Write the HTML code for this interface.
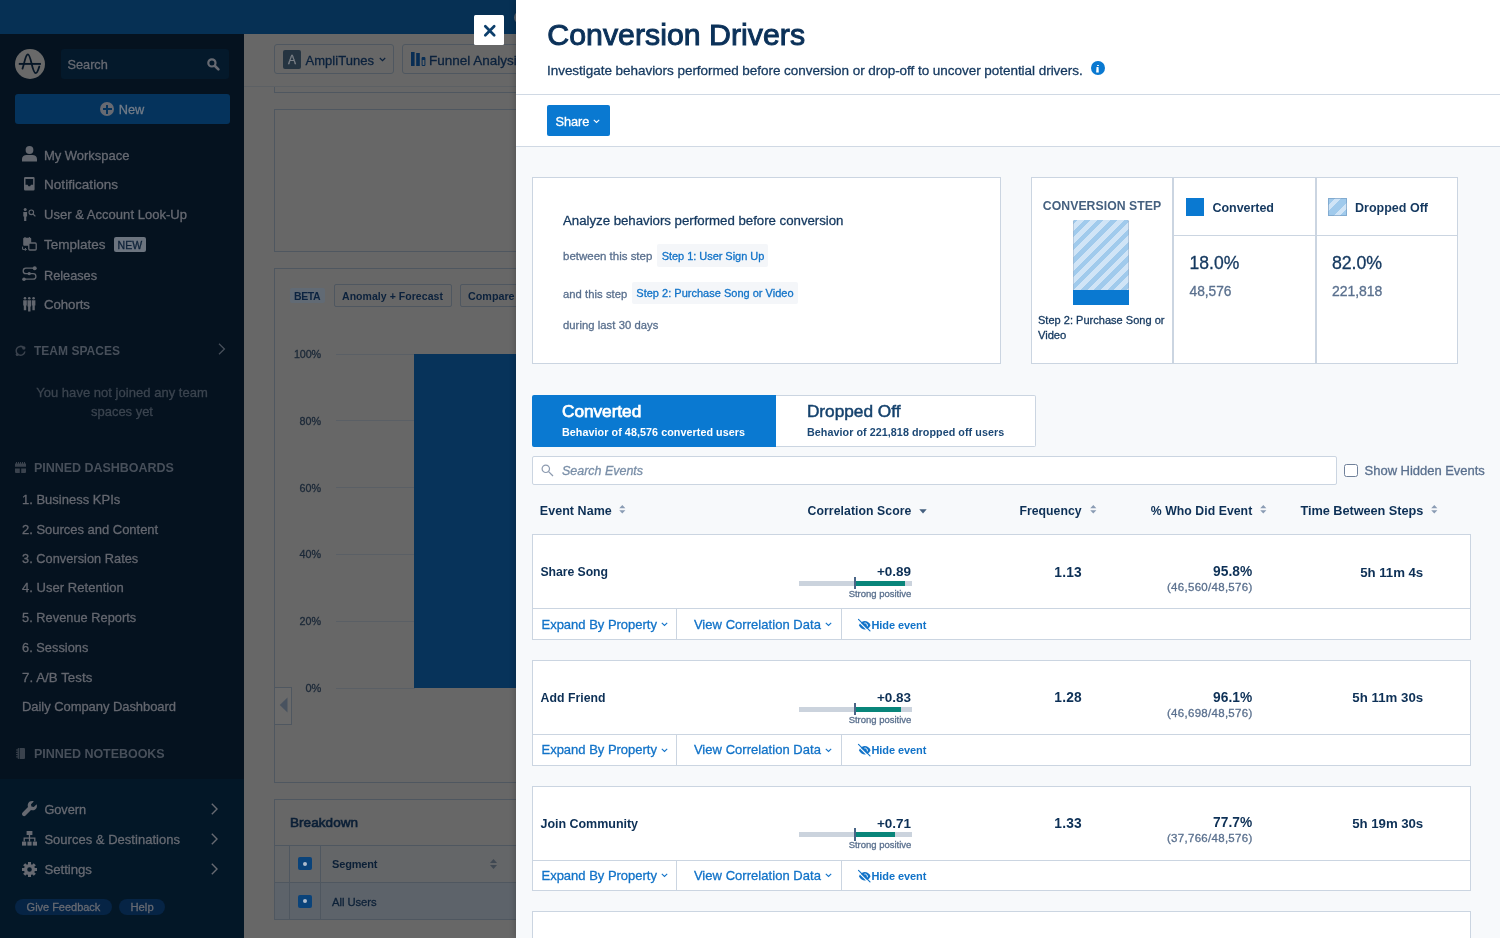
<!DOCTYPE html>
<html><head><meta charset="utf-8"><title>Conversion Drivers</title>
<style>
html,body{margin:0;padding:0}
body{width:1500px;height:938px;overflow:hidden;position:relative;background:#676767;font-family:"Liberation Sans",sans-serif}
.a{position:absolute;box-sizing:border-box}
.t{position:absolute;white-space:nowrap;display:block}
svg{position:absolute;overflow:visible}
</style></head><body><div id="w" style="position:absolute;left:0;top:0;width:1500px;height:938px;will-change:transform">
<div class="a" style="left:0;top:0;width:1500px;height:34px;background:#063054"></div>
<div class="a" style="left:514.4px;top:10.6px;width:13px;height:13px;border-radius:50%;background:#5b626b"></div>
<div class="a" style="left:244px;top:34px;width:272px;height:904px;background:#676767"></div>
<div class="a" style="left:244px;top:86px;width:272px;height:1px;background:#5c6064"></div>
<div class="a" style="left:274px;top:44px;width:120px;height:30px;border:1px solid #4f5760;border-radius:3px"></div>
<div class="a" style="left:283px;top:50.4px;width:18px;height:18.3px;background:#253441;border-radius:2px"></div>
<span class="t" style="left:288.0px;top:52.1px;font-size:12.0px;line-height:16px;color:#7b8087;letter-spacing:-0.02px;-webkit-text-stroke:0.3px;">A</span>
<span class="t" style="left:305.5px;top:50.6px;font-size:13.0px;line-height:19px;color:#0b213c;letter-spacing:0.04px;-webkit-text-stroke:0.3px;">AmpliTunes</span>
<svg style="left:379px;top:57px" width="7" height="5" viewBox="0 0 7 5"><path d="M0.8 1 L3.5 3.6 L6.2 1" fill="none" stroke="#0b213c" stroke-width="1.2"/></svg>
<div class="a" style="left:402px;top:44px;width:150px;height:30px;border:1px solid #4f5760;border-radius:3px"></div>
<svg style="left:410.5px;top:52px" width="15" height="15" viewBox="0 0 15 15"><rect x="0" y="0" width="3.6" height="14" fill="#082d54"/><rect x="5.2" y="1" width="3.6" height="13" fill="#082d54"/><rect x="10.6" y="5" width="3.8" height="9" rx="1" fill="#082d54"/><rect x="11.6" y="8" width="1.8" height="5" fill="#686868"/></svg>
<span class="t" style="left:429.0px;top:50.6px;font-size:13.5px;line-height:19px;color:#0b213c;-webkit-text-stroke:0.3px;">Funnel Analysis</span>
<div class="a" style="left:274px;top:80px;width:260px;height:13px;border:1px solid #4f5760;border-top:none;clip-path:inset(7px 0 0 0)"></div>
<div class="a" style="left:274px;top:109px;width:260px;height:143px;border:1px solid #4f5760"></div>
<div class="a" style="left:274px;top:268px;width:260px;height:515px;border:1px solid #4f5760"></div>
<div class="a" style="left:290px;top:288px;width:35px;height:14.5px;background:#616a74;border-radius:2px"></div>
<span class="t" style="left:294.0px;top:288.9px;font-size:10.5px;line-height:15px;color:#0b2340;font-weight:700;letter-spacing:-0.4px;">BETA</span>
<div class="a" style="left:334px;top:284px;width:118px;height:22.8px;border:1px solid #4f5760;border-radius:2px"></div>
<span class="t" style="left:342.0px;top:288.9px;font-size:10.5px;line-height:15px;color:#0b213c;font-weight:700;letter-spacing:0.05px;">Anomaly + Forecast</span>
<div class="a" style="left:460px;top:284px;width:80px;height:22.8px;border:1px solid #4f5760;border-radius:2px"></div>
<span class="t" style="left:468.0px;top:288.9px;font-size:10.75px;line-height:15px;color:#0b213c;font-weight:700;">Compare</span>
<span class="t" style="left:293.9px;top:347.0px;font-size:10.75px;line-height:15px;color:#1c2938;letter-spacing:-0.07px;-webkit-text-stroke:0.3px;">100%</span>
<div class="a" style="left:335.5px;top:353.5px;width:79px;height:1px;background:#5a5f65"></div>
<span class="t" style="left:299.6px;top:413.8px;font-size:10.75px;line-height:15px;color:#1c2938;letter-spacing:0.03px;-webkit-text-stroke:0.3px;">80%</span>
<div class="a" style="left:335.5px;top:420.3px;width:79px;height:1px;background:#5a5f65"></div>
<span class="t" style="left:299.6px;top:480.6px;font-size:10.75px;line-height:15px;color:#1c2938;letter-spacing:0.03px;-webkit-text-stroke:0.3px;">60%</span>
<div class="a" style="left:335.5px;top:487.1px;width:79px;height:1px;background:#5a5f65"></div>
<span class="t" style="left:299.6px;top:547.4px;font-size:10.75px;line-height:15px;color:#1c2938;letter-spacing:0.03px;-webkit-text-stroke:0.3px;">40%</span>
<div class="a" style="left:335.5px;top:553.9px;width:79px;height:1px;background:#5a5f65"></div>
<span class="t" style="left:299.6px;top:614.2px;font-size:10.75px;line-height:15px;color:#1c2938;letter-spacing:0.03px;-webkit-text-stroke:0.3px;">20%</span>
<div class="a" style="left:335.5px;top:620.7px;width:79px;height:1px;background:#5a5f65"></div>
<span class="t" style="left:305.4px;top:681.0px;font-size:11.0px;line-height:15px;color:#1c2938;letter-spacing:-0.11px;-webkit-text-stroke:0.3px;">0%</span>
<div class="a" style="left:335.5px;top:687.5px;width:79px;height:1px;background:#5a5f65"></div>
<div class="a" style="left:414px;top:354px;width:110px;height:334px;background:#07335a"></div>
<div class="a" style="left:274px;top:687px;width:18px;height:38px;border:1px solid #4f5760;background:#6a6a6a"></div>
<svg style="left:279px;top:697px" width="9" height="16" viewBox="0 0 9 16"><path d="M8.5 0.5 L8.5 15.5 L0.8 8 Z" fill="#48525f"/></svg>
<div class="a" style="left:274px;top:799px;width:260px;height:121px;border:1px solid #4f5760"></div>
<span class="t" style="left:290.0px;top:812.6px;font-size:13.5px;line-height:19px;color:#0b1f36;letter-spacing:0.06px;-webkit-text-stroke:0.65px #0b1f36;">Breakdown</span>
<div class="a" style="left:275px;top:845px;width:260px;height:37px;background:#646668;border-top:1px solid #4f5760"></div>
<div class="a" style="left:275px;top:882px;width:260px;height:37px;background:#5d636a;border-top:1px solid #4f5760"></div>
<div class="a" style="left:289px;top:845px;width:1px;height:74px;background:#4f5760"></div>
<div class="a" style="left:320px;top:845px;width:1px;height:74px;background:#4f5760"></div>
<div class="a" style="left:298px;top:857.0px;width:13.7px;height:13.3px;background:#0a437a;border-radius:2px"></div>
<div class="a" style="left:303px;top:861.6px;width:3.8px;height:4.2px;background:#aebccd;border-radius:2px"></div>
<div class="a" style="left:298px;top:894.6px;width:13.7px;height:13.3px;background:#0a437a;border-radius:2px"></div>
<div class="a" style="left:303px;top:899.2px;width:3.8px;height:4.2px;background:#aebccd;border-radius:2px"></div>
<span class="t" style="left:332.0px;top:856.2px;font-size:11.0px;line-height:16px;color:#0b1f36;font-weight:700;letter-spacing:-0.16px;">Segment</span>
<svg style="left:490px;top:859px" width="7" height="10" viewBox="0 0 7 10"><path d="M3.5 0 L7 4 L0 4 Z M0 6 L7 6 L3.5 10 Z" fill="#3f4852"/></svg>
<span class="t" style="left:332.0px;top:893.6px;font-size:11.25px;line-height:16px;color:#0d2138;letter-spacing:-0.05px;-webkit-text-stroke:0.3px;">All Users</span>
<div class="a" style="left:0;top:34px;width:244px;height:904px;background:#05121f"></div>
<div class="a" style="left:0;top:779px;width:244px;height:159px;background:#031727"></div>
<div class="a" style="left:14.8px;top:48.6px;width:30.6px;height:30.6px;border-radius:50%;background:#696969"></div>
<svg style="left:15px;top:49px" width="30" height="30" viewBox="0 0 30 30"><path d="M3.8 14.9 H25.9" stroke="#061626" stroke-width="1.9" fill="none"/><path d="M7.5 19.6 C9.6 14 10.4 5.3 12.9 5.3 C16 5.3 17.1 24.1 20.7 24.1 C22.5 24.1 23.5 20 24.3 17.5" stroke="#061626" stroke-width="1.8" fill="none" stroke-linecap="round"/></svg>
<div class="a" style="left:61px;top:49px;width:168px;height:30px;background:#04192b;border-radius:3px"></div>
<span class="t" style="left:67.6px;top:55.8px;font-size:12.75px;line-height:18px;color:#676a72;letter-spacing:-0.04px;-webkit-text-stroke:0.3px;">Search</span>
<svg style="left:207px;top:58px" width="13" height="13" viewBox="0 0 13 13"><circle cx="4.9" cy="4.9" r="3.6" fill="none" stroke="#676a72" stroke-width="2.2"/><path d="M8 8 L11.4 11.4" stroke="#676a72" stroke-width="2.6" stroke-linecap="round"/></svg>
<div class="a" style="left:15px;top:94px;width:215px;height:30px;background:#05335c;border-radius:3px"></div>
<div class="a" style="left:100px;top:102px;width:14px;height:14px;border-radius:50%;background:#676a72"></div>
<div class="a" style="left:102.5px;top:107.8px;width:9px;height:2.4px;background:#05335c"></div><div class="a" style="left:105.8px;top:104.5px;width:2.4px;height:9px;background:#05335c"></div>
<span class="t" style="left:118.7px;top:100.4px;font-size:12.75px;line-height:19px;color:#737c88;letter-spacing:-0.01px;-webkit-text-stroke:0.3px;">New</span>
<svg style="left:22.0px;top:146.3px" width="15" height="15.5" viewBox="0 0 15 15.5"><circle cx="7.5" cy="4" r="3.9" fill="#62666e"/><path d="M0 15.5 V13 C0 10.3 2.2 9 4.5 9 H10.5 C12.8 9 15 10.3 15 13 V15.5 Z" fill="#62666e"/></svg>
<svg style="left:24.2px;top:177.3px" width="10.6" height="13.4" viewBox="0 0 10.6 13.4"><path d="M1.2 0 H9.4 Q10.6 0 10.6 1.2 V12.2 Q10.6 13.4 9.4 13.4 H1.2 Q0 13.4 0 12.2 V1.2 Q0 0 1.2 0 Z M1.5 2.1 V7.8 H3.6 L4.5 9.2 H6.1 L7 7.8 H9.1 V2.1 Z" fill="#62666e" fill-rule="evenodd"/></svg>
<svg style="left:23.0px;top:207.5px" width="13" height="13" viewBox="0 0 13 13"><circle cx="2.2" cy="1.6" r="1.5" fill="#62666e"/><path d="M0.3 4 H4.1 V8.6 H3.3 V13 H1.1 V8.6 H0.3 Z" fill="#62666e"/><circle cx="8.3" cy="4.3" r="2.3" fill="none" stroke="#62666e" stroke-width="1.1"/><path d="M10 6 L12.4 8.4" stroke="#62666e" stroke-width="1.2"/></svg>
<svg style="left:22.0px;top:236.8px" width="15" height="14" viewBox="0 0 15 14"><rect x="1.2" y="0.8" width="8" height="8" rx="1" fill="#62666e"/><rect x="6.8" y="6" width="7.4" height="7" rx="1" fill="#05121f" stroke="#62666e" stroke-width="1.3"/><path d="M0.6 9.6 V12.4 H4.2 M3 11 L4.4 12.4 L3 13.8" fill="none" stroke="#62666e" stroke-width="1"/><path d="M3 0 V1.5 M7.4 0 V1.5" stroke="#62666e" stroke-width="1"/></svg>
<svg style="left:22.0px;top:266.0px" width="15" height="15.5" viewBox="0 0 15 15.5"><path d="M11.5 2.2 H3.9 A2.7 2.7 0 0 0 3.9 7.6 H11.1 A2.8 2.8 0 0 1 11.1 13.2 H2.2" fill="none" stroke="#62666e" stroke-width="1.3"/><circle cx="12.7" cy="2.2" r="2" fill="#62666e"/><circle cx="7.2" cy="7.6" r="1.7" fill="#62666e"/><circle cx="2" cy="13.2" r="1.8" fill="#62666e"/></svg>
<svg style="left:23.0px;top:296.6px" width="12.6" height="14.5" viewBox="0 0 12.6 14.5"><circle cx="2" cy="1.3" r="1.3" fill="#62666e"/><circle cx="6.3" cy="1.3" r="1.3" fill="#62666e"/><circle cx="10.6" cy="1.3" r="1.3" fill="#62666e"/><path d="M0.2 3.3 H3.8 V8.6 H3.2 V13.2 H0.8 V8.6 H0.2 Z" fill="#62666e"/><path d="M4.5 3.3 H8.1 V9.6 H7.5 V14.5 H5.1 V9.6 H4.5 Z" fill="#62666e"/><path d="M8.8 3.3 H12.4 V8.6 H11.8 V13.2 H9.4 V8.6 H8.8 Z" fill="#62666e"/></svg>
<span class="t" style="left:44.0px;top:146.8px;font-size:13.0px;line-height:18px;color:#676a72;letter-spacing:-0.03px;-webkit-text-stroke:0.3px;">My Workspace</span>
<span class="t" style="left:44.0px;top:176.2px;font-size:13.5px;line-height:18px;color:#676a72;letter-spacing:0.04px;-webkit-text-stroke:0.3px;">Notifications</span>
<span class="t" style="left:44.0px;top:206.4px;font-size:13.0px;line-height:18px;color:#676a72;letter-spacing:0.03px;-webkit-text-stroke:0.3px;">User &amp; Account Look-Up</span>
<span class="t" style="left:44.0px;top:236.4px;font-size:13.5px;line-height:18px;color:#676a72;-webkit-text-stroke:0.3px;">Templates</span>
<div class="a" style="left:113.6px;top:237px;width:32.4px;height:14.5px;background:#6c747f;border-radius:2px"></div>
<span class="t" style="left:117.5px;top:237.7px;font-size:10.5px;line-height:15px;color:#0d2138;letter-spacing:0.1px;-webkit-text-stroke:0.3px;">NEW</span>
<span class="t" style="left:44.0px;top:266.6px;font-size:12.75px;line-height:18px;color:#676a72;letter-spacing:-0.02px;-webkit-text-stroke:0.3px;">Releases</span>
<span class="t" style="left:44.0px;top:296.0px;font-size:13.25px;line-height:18px;color:#676a72;letter-spacing:-0.07px;-webkit-text-stroke:0.3px;">Cohorts</span>
<svg style="left:15.0px;top:345.5px" width="11.5" height="11" viewBox="0 0 11.5 11"><path d="M8.6 1.6 A4.4 4.4 0 1 0 9.9 5.5" fill="none" stroke="#3a424d" stroke-width="1.5"/><circle cx="8.8" cy="2" r="1.7" fill="#3a424d"/><circle cx="2.2" cy="8.6" r="1.5" fill="#3a424d"/></svg>
<span class="t" style="left:34.0px;top:343.3px;font-size:12.0px;line-height:17px;color:#474f5a;font-weight:700;letter-spacing:0.02px;">TEAM SPACES</span>
<svg style="left:218.0px;top:343.0px" width="7.5" height="12" viewBox="0 0 7.5 12"><path d="M1 0.8 L6.4 6 L1 11.2" fill="none" stroke="#474f5a" stroke-width="1.3"/></svg>
<span class="t" style="left:36.2px;top:383.9px;font-size:13.0px;line-height:18px;color:#3b444f;letter-spacing:0.03px;-webkit-text-stroke:0.3px;">You have not joined any team</span>
<span class="t" style="left:91.0px;top:402.9px;font-size:13.0px;line-height:18px;color:#3b444f;letter-spacing:-0.02px;-webkit-text-stroke:0.3px;">spaces yet</span>
<svg style="left:15.0px;top:461.5px" width="11" height="11" viewBox="0 0 11 11"><path d="M0 1.5 H11 V4.8 H0 Z M0 6.4 H4.8 V11 H1 Q0 11 0 10 Z M6.2 6.4 H11 V10 Q11 11 10 11 H6.2 Z" fill="#3a424d"/><path d="M1.5 0 V2 M3.5 0 V2 M5.5 0 V2 M7.5 0 V2 M9.5 0 V2" stroke="#3a424d" stroke-width="1"/></svg>
<span class="t" style="left:34.0px;top:459.8px;font-size:12.5px;line-height:17px;color:#474f5a;font-weight:700;letter-spacing:-0.03px;">PINNED DASHBOARDS</span>
<span class="t" style="left:22.0px;top:490.6px;font-size:13.0px;line-height:18px;color:#64676f;-webkit-text-stroke:0.3px;">1. Business KPIs</span>
<span class="t" style="left:22.0px;top:520.8px;font-size:13.0px;line-height:18px;color:#64676f;letter-spacing:-0.02px;-webkit-text-stroke:0.3px;">2. Sources and Content</span>
<span class="t" style="left:22.0px;top:550.0px;font-size:12.75px;line-height:18px;color:#64676f;letter-spacing:0.04px;-webkit-text-stroke:0.3px;">3. Conversion Rates</span>
<span class="t" style="left:22.0px;top:579.4px;font-size:13.0px;line-height:18px;color:#64676f;letter-spacing:0.04px;-webkit-text-stroke:0.3px;">4. User Retention</span>
<span class="t" style="left:22.0px;top:609.3px;font-size:12.75px;line-height:18px;color:#64676f;letter-spacing:0.05px;-webkit-text-stroke:0.3px;">5. Revenue Reports</span>
<span class="t" style="left:22.0px;top:638.7px;font-size:12.75px;line-height:18px;color:#64676f;letter-spacing:0.04px;-webkit-text-stroke:0.3px;">6. Sessions</span>
<span class="t" style="left:22.0px;top:668.6px;font-size:13.25px;line-height:18px;color:#64676f;letter-spacing:0.05px;-webkit-text-stroke:0.3px;">7. A/B Tests</span>
<span class="t" style="left:22.0px;top:697.8px;font-size:13.0px;line-height:18px;color:#64676f;letter-spacing:-0.06px;-webkit-text-stroke:0.3px;">Daily Company Dashboard</span>
<svg style="left:15.5px;top:747.5px" width="9" height="11" viewBox="0 0 9 11"><rect x="1.6" y="0" width="7.4" height="11" rx="1" fill="#3a424d"/><path d="M0 2 H2.6 M0 4.3 H2.6 M0 6.6 H2.6 M0 8.9 H2.6" stroke="#3a424d" stroke-width="1"/><path d="M3.4 0 V11" stroke="#05121f" stroke-width="0.7"/></svg>
<span class="t" style="left:34.0px;top:745.6px;font-size:12.5px;line-height:17px;color:#474f5a;font-weight:700;letter-spacing:-0.04px;">PINNED NOTEBOOKS</span>
<svg style="left:22.0px;top:800.5px" width="15" height="15.5" viewBox="0 0 15 15.5"><path d="M14.6 3.2 L11.8 6 L9.4 5.6 L9 3.2 L11.8 0.4 C9.6 -0.4 7.4 0.4 6.4 2 C5.6 3.4 5.6 4.8 6 6 L0.6 11.6 C-0.2 12.4 -0.2 13.8 0.6 14.6 C1.4 15.4 2.8 15.4 3.6 14.6 L9 9 C10.4 9.6 12 9.4 13.2 8.4 C14.8 7.2 15.4 5.2 14.6 3.2 Z" fill="#676a72"/></svg>
<span class="t" style="left:44.4px;top:801.2px;font-size:12.75px;line-height:18px;color:#676a72;letter-spacing:-0.04px;-webkit-text-stroke:0.3px;">Govern</span>
<svg style="left:22.0px;top:831.0px" width="15" height="15" viewBox="0 0 15 15"><rect x="4.6" y="0" width="5.8" height="4" fill="#676a72"/><path d="M7.5 4 V7.2 M2.2 10.6 V7.2 H12.8 V10.6 M7.5 7.2 V10.6" fill="none" stroke="#676a72" stroke-width="1.3"/><rect x="0" y="10.6" width="4.2" height="4" fill="#676a72"/><rect x="5.4" y="10.6" width="4.2" height="4" fill="#676a72"/><rect x="10.8" y="10.6" width="4.2" height="4" fill="#676a72"/></svg>
<span class="t" style="left:44.4px;top:830.8px;font-size:13.0px;line-height:18px;color:#676a72;letter-spacing:0.02px;-webkit-text-stroke:0.3px;">Sources &amp; Destinations</span>
<svg style="left:22.0px;top:861.5px" width="15" height="15" viewBox="0 0 15 15"><circle cx="7.5" cy="7.5" r="3.9" fill="none" stroke="#676a72" stroke-width="3.2"/><g stroke="#676a72" stroke-width="3" stroke-linecap="butt"><path d="M7.5 0 V3"/><path d="M7.5 12 V15"/><path d="M0 7.5 H3"/><path d="M12 7.5 H15"/><path d="M2.2 2.2 L4.3 4.3"/><path d="M10.7 10.7 L12.8 12.8"/><path d="M2.2 12.8 L4.3 10.7"/><path d="M10.7 4.3 L12.8 2.2"/></g></svg>
<span class="t" style="left:44.4px;top:860.8px;font-size:13.25px;line-height:18px;color:#676a72;letter-spacing:-0.04px;-webkit-text-stroke:0.3px;">Settings</span>
<svg style="left:211.4px;top:802.5px" width="7" height="12" viewBox="0 0 7 12"><path d="M0.8 0.8 L6 6 L0.8 11.2" fill="none" stroke="#676a72" stroke-width="1.4"/></svg>
<svg style="left:211.4px;top:832.5px" width="7" height="12" viewBox="0 0 7 12"><path d="M0.8 0.8 L6 6 L0.8 11.2" fill="none" stroke="#676a72" stroke-width="1.4"/></svg>
<svg style="left:211.4px;top:862.5px" width="7" height="12" viewBox="0 0 7 12"><path d="M0.8 0.8 L6 6 L0.8 11.2" fill="none" stroke="#676a72" stroke-width="1.4"/></svg>
<div class="a" style="left:15px;top:899px;width:97px;height:16px;background:#062445;border-radius:8px"></div>
<span class="t" style="left:26.6px;top:899.0px;font-size:11.0px;line-height:16px;color:#676a72;letter-spacing:-0.02px;-webkit-text-stroke:0.3px;">Give Feedback</span>
<div class="a" style="left:119px;top:899px;width:46px;height:16px;background:#062445;border-radius:8px"></div>
<span class="t" style="left:130.4px;top:899.0px;font-size:11.25px;line-height:16px;color:#676a72;letter-spacing:0.05px;-webkit-text-stroke:0.3px;">Help</span>
<div class="a" style="left:474.2px;top:15px;width:30.2px;height:29.8px;background:#fff;border-radius:1.5px"></div>
<svg style="left:484px;top:24.6px" width="11.5" height="11.5" viewBox="0 0 11.5 11.5"><path d="M1.3 1.3 L10.2 10.2 M10.2 1.3 L1.3 10.2" stroke="#0d3f6c" stroke-width="2.7" stroke-linecap="round" fill="none"/></svg>
<div class="a" style="left:516px;top:0;width:984px;height:938px;background:#f7f9fb;box-shadow:-2px 0 5px rgba(0,0,0,0.16)"></div>
<div class="a" style="left:516px;top:0;width:984px;height:146px;background:#fff"></div>
<div class="a" style="left:516px;top:94px;width:984px;height:1px;background:#d0d9e4"></div>
<div class="a" style="left:516px;top:146px;width:984px;height:1px;background:#d0d9e4"></div>
<span class="t" style="left:547.3px;top:13.8px;font-size:30.25px;line-height:42px;color:#0b3159;letter-spacing:0.03px;-webkit-text-stroke:1px #0b3159;">Conversion Drivers</span>
<span class="t" style="left:547.0px;top:61.9px;font-size:13.5px;line-height:18px;color:#14385f;letter-spacing:-0.04px;-webkit-text-stroke:0.3px;">Investigate behaviors performed before conversion or drop-off to uncover potential drivers.</span>
<div class="a" style="left:1090.8px;top:61.2px;width:13.8px;height:13.8px;border-radius:50%;background:#0a79d1"></div>
<div class="a" style="left:1096.7px;top:64.6px;width:2.2px;height:1.8px;background:#fff;border-radius:0.8px"></div><svg style="left:1096.3px;top:67.3px" width="3" height="5.6" viewBox="0 0 3 5.6"><path d="M0.5 0 H2.5 L2.8 5.6 H0.2 Z" fill="#fff"/></svg>
<div class="a" style="left:547px;top:105.4px;width:63px;height:30.4px;background:#0a79d1;border-radius:2px"></div>
<span class="t" style="left:555.5px;top:111.8px;font-size:12.75px;line-height:19px;color:#fff;letter-spacing:-0.06px;-webkit-text-stroke:0.3px #fff;">Share</span>
<svg style="left:592.6px;top:118.8px" width="7" height="5" viewBox="0 0 7 5"><path d="M0.8 0.8 L3.5 3.4 L6.2 0.8" fill="none" stroke="#fff" stroke-width="1.1"/></svg>
<div class="a" style="left:532px;top:177.4px;width:468.5px;height:187px;background:#fff;border:1px solid #cbd5e1"></div>
<span class="t" style="left:563.0px;top:210.8px;font-size:13.25px;line-height:19px;color:#14385f;letter-spacing:-0.02px;-webkit-text-stroke:0.3px;">Analyze behaviors performed before conversion</span>
<span class="t" style="left:563.0px;top:248.0px;font-size:11.5px;line-height:16px;color:#5a708e;letter-spacing:-0.01px;-webkit-text-stroke:0.3px;">between this step</span>
<div class="a" style="left:656.7px;top:244.4px;width:111.6px;height:22.4px;background:#f4f6f9;border-radius:2px"></div>
<span class="t" style="left:661.7px;top:248.5px;font-size:11.0px;line-height:15px;color:#1273c8;letter-spacing:-0.04px;-webkit-text-stroke:0.3px;">Step 1: User Sign Up</span>
<span class="t" style="left:563.0px;top:285.6px;font-size:11.25px;line-height:16px;color:#5a708e;letter-spacing:0.04px;-webkit-text-stroke:0.3px;">and this step</span>
<div class="a" style="left:631.7px;top:281.8px;width:166px;height:22.4px;background:#f4f6f9;border-radius:2px"></div>
<span class="t" style="left:636.3px;top:285.8px;font-size:11.0px;line-height:15px;color:#1273c8;letter-spacing:0.01px;-webkit-text-stroke:0.3px;">Step 2: Purchase Song or Video</span>
<span class="t" style="left:563.0px;top:317.4px;font-size:11.25px;line-height:16px;color:#5a708e;letter-spacing:0.05px;-webkit-text-stroke:0.3px;">during last 30 days</span>
<div class="a" style="left:1030.6px;top:177.4px;width:142.6px;height:187px;background:#fff;border:1px solid #cbd5e1"></div>
<div class="a" style="left:1173.2px;top:177.4px;width:142.6px;height:187px;background:#fff;border:1px solid #cbd5e1"></div>
<div class="a" style="left:1315.8px;top:177.4px;width:142.6px;height:187px;background:#fff;border:1px solid #cbd5e1"></div>
<div class="a" style="left:1174px;top:235px;width:141px;height:1px;background:#cbd5e1"></div>
<div class="a" style="left:1317px;top:235px;width:140px;height:1px;background:#cbd5e1"></div>
<span class="t" style="left:1042.8px;top:196.8px;font-size:12.25px;line-height:18px;color:#45607f;font-weight:700;letter-spacing:0.05px;">CONVERSION STEP</span>
<div class="a" style="left:1073.4px;top:220px;width:55.8px;height:85px;background:repeating-linear-gradient(135deg,#a0caec 0,#a0caec 3px,#d0e4f6 3px,#d0e4f6 7.9px,#a0caec 7.9px,#a0caec 9.4px);border-radius:1.5px;box-shadow:inset 1px 0 0 rgba(150,170,195,0.45),inset -1px 0 0 rgba(150,170,195,0.55)"></div>
<div class="a" style="left:1073.4px;top:290px;width:55.8px;height:15px;background:#0a79d1"></div>
<span class="t" style="left:1038.0px;top:313.3px;font-size:11.0px;line-height:15px;color:#14385f;letter-spacing:0.02px;-webkit-text-stroke:0.3px;">Step 2: Purchase Song or</span>
<span class="t" style="left:1038.0px;top:327.8px;font-size:11.25px;line-height:15px;color:#14385f;letter-spacing:-0.07px;-webkit-text-stroke:0.3px;">Video</span>
<div class="a" style="left:1186px;top:197.5px;width:18.3px;height:18.3px;background:#0a79d1"></div>
<span class="t" style="left:1212.5px;top:198.8px;font-size:12.5px;line-height:18px;color:#14385f;font-weight:700;letter-spacing:-0.04px;">Converted</span>
<div class="a" style="left:1328.4px;top:197.5px;width:18.3px;height:18.3px;background:repeating-linear-gradient(135deg,#a0caec 0,#a0caec 5.3px,#d0e4f6 5.3px,#d0e4f6 9.55px,#a0caec 9.55px,#a0caec 11.45px);box-shadow:inset 0 0 0 1px rgba(110,150,190,0.6)"></div>
<span class="t" style="left:1355.0px;top:198.8px;font-size:12.5px;line-height:18px;color:#14385f;font-weight:700;letter-spacing:0.01px;">Dropped Off</span>
<span class="t" style="left:1189.6px;top:251.4px;font-size:17.5px;line-height:25px;color:#14385f;letter-spacing:0.02px;-webkit-text-stroke:0.3px;">18.0%</span>
<span class="t" style="left:1189.6px;top:281.8px;font-size:13.75px;line-height:19px;color:#5a708e;letter-spacing:-0.03px;-webkit-text-stroke:0.3px;">48,576</span>
<span class="t" style="left:1332.0px;top:251.4px;font-size:17.75px;line-height:25px;color:#14385f;letter-spacing:-0.09px;-webkit-text-stroke:0.3px;">82.0%</span>
<span class="t" style="left:1332.0px;top:281.8px;font-size:14.0px;line-height:19px;color:#5a708e;letter-spacing:-0.05px;-webkit-text-stroke:0.3px;">221,818</span>
<div class="a" style="left:532px;top:395.2px;width:244px;height:52px;background:#0a79d1;border-radius:2px 0 0 2px"></div>
<div class="a" style="left:776px;top:395.2px;width:259.5px;height:52px;background:#fff;border:1px solid #cbd5e1;border-left:none;border-radius:0 2px 2px 0"></div>
<span class="t" style="left:562.0px;top:399.0px;font-size:17.25px;line-height:24px;color:#fff;letter-spacing:-0.04px;-webkit-text-stroke:0.75px #fff;">Converted</span>
<span class="t" style="left:562.0px;top:424.7px;font-size:10.75px;line-height:15px;color:#fff;font-weight:700;letter-spacing:0.06px;">Behavior of 48,576 converted users</span>
<span class="t" style="left:806.9px;top:399.0px;font-size:17.25px;line-height:24px;color:#15426d;letter-spacing:-0.01px;-webkit-text-stroke:0.5px #15426d;">Dropped Off</span>
<span class="t" style="left:807.0px;top:424.7px;font-size:10.75px;line-height:15px;color:#1c4875;font-weight:700;letter-spacing:0.05px;">Behavior of 221,818 dropped off users</span>
<div class="a" style="left:532px;top:456px;width:805px;height:28.5px;background:#fff;border:1px solid #cbd5e1;border-radius:2px"></div>
<svg style="left:540.5px;top:463.5px" width="13" height="13" viewBox="0 0 13 13"><circle cx="4.8" cy="4.8" r="3.7" fill="none" stroke="#8d9bb0" stroke-width="1.2"/><path d="M7.6 7.6 L12 12" stroke="#8d9bb0" stroke-width="1.3"/></svg>
<span class="t" style="left:562.0px;top:462.3px;font-size:12.5px;line-height:18px;color:#7a8fa8;font-style:italic;letter-spacing:-0.02px;-webkit-text-stroke:0.3px;">Search Events</span>
<div class="a" style="left:1344px;top:464px;width:13.5px;height:13px;background:#fff;border:1px solid #70819a;border-radius:2.5px"></div>
<span class="t" style="left:1364.6px;top:462.3px;font-size:13.0px;line-height:18px;color:#5a708e;letter-spacing:-0.03px;-webkit-text-stroke:0.3px;">Show Hidden Events</span>
<span class="t" style="left:539.8px;top:502.1px;font-size:12.5px;line-height:18px;color:#0d3056;font-weight:700;letter-spacing:0.05px;">Event Name</span>
<svg style="left:619.4px;top:505.0px" width="6.6" height="8.4" viewBox="0 0 7 9"><path d="M3.5 0 L6.8 3.5 L0.2 3.5 Z M0.2 5.5 L6.8 5.5 L3.5 9 Z" fill="#8a9cb4"/></svg>
<span class="t" style="left:807.6px;top:502.1px;font-size:12.25px;line-height:18px;color:#0d3056;font-weight:700;letter-spacing:0.06px;">Correlation Score</span>
<svg style="left:918.5px;top:509px" width="8" height="5" viewBox="0 0 8 5"><path d="M0.3 0.3 L7.7 0.3 L4 4.6 Z" fill="#45607f"/></svg>
<span class="t" style="left:1019.4px;top:502.1px;font-size:12.25px;line-height:18px;color:#0d3056;font-weight:700;letter-spacing:0.04px;">Frequency</span>
<svg style="left:1089.8px;top:505.0px" width="6.6" height="8.4" viewBox="0 0 7 9"><path d="M3.5 0 L6.8 3.5 L0.2 3.5 Z M0.2 5.5 L6.8 5.5 L3.5 9 Z" fill="#8a9cb4"/></svg>
<span class="t" style="left:1150.8px;top:502.1px;font-size:12.25px;line-height:18px;color:#0d3056;font-weight:700;letter-spacing:0.05px;">% Who Did Event</span>
<svg style="left:1260.4px;top:505.0px" width="6.6" height="8.4" viewBox="0 0 7 9"><path d="M3.5 0 L6.8 3.5 L0.2 3.5 Z M0.2 5.5 L6.8 5.5 L3.5 9 Z" fill="#8a9cb4"/></svg>
<span class="t" style="left:1300.5px;top:502.1px;font-size:12.75px;line-height:18px;color:#0d3056;font-weight:700;letter-spacing:-0.06px;">Time Between Steps</span>
<svg style="left:1430.8px;top:505.0px" width="6.6" height="8.4" viewBox="0 0 7 9"><path d="M3.5 0 L6.8 3.5 L0.2 3.5 Z M0.2 5.5 L6.8 5.5 L3.5 9 Z" fill="#8a9cb4"/></svg>
<div class="a" style="left:532px;top:534.4px;width:939px;height:105.8px;background:#fff;border:1px solid #cbd5e1"></div>
<div class="a" style="left:533px;top:608.4px;width:937px;height:1px;background:#cbd5e1"></div>
<div class="a" style="left:676.3px;top:608.4px;width:1px;height:31px;background:#cbd5e1"></div>
<div class="a" style="left:841px;top:608.4px;width:1px;height:31px;background:#cbd5e1"></div>
<span class="t" style="left:540.5px;top:563.4px;font-size:12.25px;line-height:18px;color:#0d3056;font-weight:700;letter-spacing:-0.06px;">Share Song</span>
<span class="t" style="left:877.0px;top:563.3px;font-size:13.5px;line-height:18px;color:#0d3056;font-weight:700;letter-spacing:-0.04px;">+0.89</span>
<div class="a" style="left:798.8px;top:581.1px;width:112.8px;height:5px;background:#cbd3dd"></div>
<div class="a" style="left:854.5px;top:581.1px;width:50.3px;height:5px;background:#09857a"></div>
<div class="a" style="left:854px;top:576.9px;width:1.6px;height:12.5px;background:#4a6687"></div>
<span class="t" style="left:848.7px;top:587.0px;font-size:9.5px;line-height:14px;color:#5a708e;letter-spacing:-0.02px;-webkit-text-stroke:0.3px;">Strong positive</span>
<span class="t" style="left:1054.3px;top:563.8px;font-size:13.75px;line-height:18px;color:#0d3056;font-weight:700;letter-spacing:0.21px;">1.13</span>
<span class="t" style="left:1213.0px;top:563.0px;font-size:13.75px;line-height:18px;color:#0d3056;font-weight:700;letter-spacing:0.07px;">95.8%</span>
<span class="t" style="left:1167.0px;top:580.2px;font-size:11.5px;line-height:15px;color:#5a708e;letter-spacing:0.29px;-webkit-text-stroke:0.3px;">(46,560/48,576)</span>
<span class="t" style="left:1360.3px;top:563.8px;font-size:13.25px;line-height:18px;color:#0d3056;font-weight:700;letter-spacing:-0.06px;">5h 11m 4s</span>
<span class="t" style="left:541.5px;top:614.5px;font-size:13.0px;line-height:19px;color:#1273c8;letter-spacing:-0.01px;-webkit-text-stroke:0.3px;">Expand By Property</span>
<svg style="left:660.5px;top:622.0px" width="7" height="5" viewBox="0 0 7 5"><path d="M0.8 0.8 L3.5 3.4 L6.2 0.8" fill="none" stroke="#1273c8" stroke-width="1.1"/></svg>
<span class="t" style="left:693.9px;top:614.5px;font-size:13.0px;line-height:19px;color:#1273c8;letter-spacing:0.04px;-webkit-text-stroke:0.3px;">View Correlation Data</span>
<svg style="left:825.3px;top:622.0px" width="7" height="5" viewBox="0 0 7 5"><path d="M0.8 0.8 L3.5 3.4 L6.2 0.8" fill="none" stroke="#1273c8" stroke-width="1.1"/></svg>
<svg style="left:857.8px;top:618.6px" width="13" height="12.4" viewBox="0 0 13 12.4"><path d="M0.9 6.2 C2.6 3 4.6 1.9 6.8 1.9 C9.1 1.9 11.1 3 12.6 6.2 C11.1 9.4 9.1 10.5 6.8 10.5 C4.6 10.5 2.6 9.4 0.9 6.2 Z" fill="#1273c8"/><path d="M6.4 4.1 A2.5 2.5 0 0 1 9.3 7.3" fill="none" stroke="#fff" stroke-width="0.9"/><path d="M-0.3 1.6 L10.9 12.6" stroke="#fff" stroke-width="1.3"/><path d="M0.5 0.4 L12 11.8" stroke="#1273c8" stroke-width="1.15" stroke-linecap="round"/></svg>
<span class="t" style="left:871.5px;top:616.7px;font-size:11.0px;line-height:16px;color:#1273c8;font-weight:700;letter-spacing:-0.09px;">Hide event</span>
<div class="a" style="left:532px;top:660.0px;width:939px;height:105.8px;background:#fff;border:1px solid #cbd5e1"></div>
<div class="a" style="left:533px;top:734.0px;width:937px;height:1px;background:#cbd5e1"></div>
<div class="a" style="left:676.3px;top:734.0px;width:1px;height:31px;background:#cbd5e1"></div>
<div class="a" style="left:841px;top:734.0px;width:1px;height:31px;background:#cbd5e1"></div>
<span class="t" style="left:540.5px;top:689.0px;font-size:12.25px;line-height:18px;color:#0d3056;font-weight:700;letter-spacing:0.04px;">Add Friend</span>
<span class="t" style="left:877.0px;top:688.9px;font-size:13.5px;line-height:18px;color:#0d3056;font-weight:700;letter-spacing:-0.04px;">+0.83</span>
<div class="a" style="left:798.8px;top:706.7px;width:112.8px;height:5px;background:#cbd3dd"></div>
<div class="a" style="left:854.5px;top:706.7px;width:46.9px;height:5px;background:#09857a"></div>
<div class="a" style="left:854px;top:702.5px;width:1.6px;height:12.5px;background:#4a6687"></div>
<span class="t" style="left:848.7px;top:712.6px;font-size:9.5px;line-height:14px;color:#5a708e;letter-spacing:-0.02px;-webkit-text-stroke:0.3px;">Strong positive</span>
<span class="t" style="left:1054.3px;top:689.4px;font-size:13.75px;line-height:18px;color:#0d3056;font-weight:700;letter-spacing:0.21px;">1.28</span>
<span class="t" style="left:1213.0px;top:688.6px;font-size:13.75px;line-height:18px;color:#0d3056;font-weight:700;letter-spacing:0.07px;">96.1%</span>
<span class="t" style="left:1167.0px;top:705.8px;font-size:11.5px;line-height:15px;color:#5a708e;letter-spacing:0.29px;-webkit-text-stroke:0.3px;">(46,698/48,576)</span>
<span class="t" style="left:1352.3px;top:689.4px;font-size:13.25px;line-height:18px;color:#0d3056;font-weight:700;letter-spacing:0.02px;">5h 11m 30s</span>
<span class="t" style="left:541.5px;top:740.1px;font-size:13.0px;line-height:19px;color:#1273c8;letter-spacing:-0.01px;-webkit-text-stroke:0.3px;">Expand By Property</span>
<svg style="left:660.5px;top:747.6px" width="7" height="5" viewBox="0 0 7 5"><path d="M0.8 0.8 L3.5 3.4 L6.2 0.8" fill="none" stroke="#1273c8" stroke-width="1.1"/></svg>
<span class="t" style="left:693.9px;top:740.1px;font-size:13.0px;line-height:19px;color:#1273c8;letter-spacing:0.04px;-webkit-text-stroke:0.3px;">View Correlation Data</span>
<svg style="left:825.3px;top:747.6px" width="7" height="5" viewBox="0 0 7 5"><path d="M0.8 0.8 L3.5 3.4 L6.2 0.8" fill="none" stroke="#1273c8" stroke-width="1.1"/></svg>
<svg style="left:857.8px;top:744.2px" width="13" height="12.4" viewBox="0 0 13 12.4"><path d="M0.9 6.2 C2.6 3 4.6 1.9 6.8 1.9 C9.1 1.9 11.1 3 12.6 6.2 C11.1 9.4 9.1 10.5 6.8 10.5 C4.6 10.5 2.6 9.4 0.9 6.2 Z" fill="#1273c8"/><path d="M6.4 4.1 A2.5 2.5 0 0 1 9.3 7.3" fill="none" stroke="#fff" stroke-width="0.9"/><path d="M-0.3 1.6 L10.9 12.6" stroke="#fff" stroke-width="1.3"/><path d="M0.5 0.4 L12 11.8" stroke="#1273c8" stroke-width="1.15" stroke-linecap="round"/></svg>
<span class="t" style="left:871.5px;top:742.3px;font-size:11.0px;line-height:16px;color:#1273c8;font-weight:700;letter-spacing:-0.09px;">Hide event</span>
<div class="a" style="left:532px;top:785.6px;width:939px;height:105.8px;background:#fff;border:1px solid #cbd5e1"></div>
<div class="a" style="left:533px;top:859.6px;width:937px;height:1px;background:#cbd5e1"></div>
<div class="a" style="left:676.3px;top:859.6px;width:1px;height:31px;background:#cbd5e1"></div>
<div class="a" style="left:841px;top:859.6px;width:1px;height:31px;background:#cbd5e1"></div>
<span class="t" style="left:540.5px;top:814.6px;font-size:12.5px;line-height:18px;color:#0d3056;font-weight:700;letter-spacing:-0.03px;">Join Community</span>
<span class="t" style="left:877.0px;top:814.5px;font-size:13.5px;line-height:18px;color:#0d3056;font-weight:700;letter-spacing:-0.04px;">+0.71</span>
<div class="a" style="left:798.8px;top:832.3px;width:112.8px;height:5px;background:#cbd3dd"></div>
<div class="a" style="left:854.5px;top:832.3px;width:40.1px;height:5px;background:#09857a"></div>
<div class="a" style="left:854px;top:828.1px;width:1.6px;height:12.5px;background:#4a6687"></div>
<span class="t" style="left:848.7px;top:838.2px;font-size:9.5px;line-height:14px;color:#5a708e;letter-spacing:-0.02px;-webkit-text-stroke:0.3px;">Strong positive</span>
<span class="t" style="left:1054.3px;top:815.0px;font-size:13.75px;line-height:18px;color:#0d3056;font-weight:700;letter-spacing:0.21px;">1.33</span>
<span class="t" style="left:1213.0px;top:814.2px;font-size:13.75px;line-height:18px;color:#0d3056;font-weight:700;letter-spacing:0.07px;">77.7%</span>
<span class="t" style="left:1167.0px;top:831.4px;font-size:11.5px;line-height:15px;color:#5a708e;letter-spacing:0.29px;-webkit-text-stroke:0.3px;">(37,766/48,576)</span>
<span class="t" style="left:1352.3px;top:815.0px;font-size:13.25px;line-height:18px;color:#0d3056;font-weight:700;letter-spacing:-0.06px;">5h 19m 30s</span>
<span class="t" style="left:541.5px;top:865.7px;font-size:13.0px;line-height:19px;color:#1273c8;letter-spacing:-0.01px;-webkit-text-stroke:0.3px;">Expand By Property</span>
<svg style="left:660.5px;top:873.2px" width="7" height="5" viewBox="0 0 7 5"><path d="M0.8 0.8 L3.5 3.4 L6.2 0.8" fill="none" stroke="#1273c8" stroke-width="1.1"/></svg>
<span class="t" style="left:693.9px;top:865.7px;font-size:13.0px;line-height:19px;color:#1273c8;letter-spacing:0.04px;-webkit-text-stroke:0.3px;">View Correlation Data</span>
<svg style="left:825.3px;top:873.2px" width="7" height="5" viewBox="0 0 7 5"><path d="M0.8 0.8 L3.5 3.4 L6.2 0.8" fill="none" stroke="#1273c8" stroke-width="1.1"/></svg>
<svg style="left:857.8px;top:869.8px" width="13" height="12.4" viewBox="0 0 13 12.4"><path d="M0.9 6.2 C2.6 3 4.6 1.9 6.8 1.9 C9.1 1.9 11.1 3 12.6 6.2 C11.1 9.4 9.1 10.5 6.8 10.5 C4.6 10.5 2.6 9.4 0.9 6.2 Z" fill="#1273c8"/><path d="M6.4 4.1 A2.5 2.5 0 0 1 9.3 7.3" fill="none" stroke="#fff" stroke-width="0.9"/><path d="M-0.3 1.6 L10.9 12.6" stroke="#fff" stroke-width="1.3"/><path d="M0.5 0.4 L12 11.8" stroke="#1273c8" stroke-width="1.15" stroke-linecap="round"/></svg>
<span class="t" style="left:871.5px;top:867.9px;font-size:11.0px;line-height:16px;color:#1273c8;font-weight:700;letter-spacing:-0.09px;">Hide event</span>
<div class="a" style="left:532px;top:911.2px;width:939px;height:60px;background:#fff;border:1px solid #cbd5e1"></div>
</div></body></html>
